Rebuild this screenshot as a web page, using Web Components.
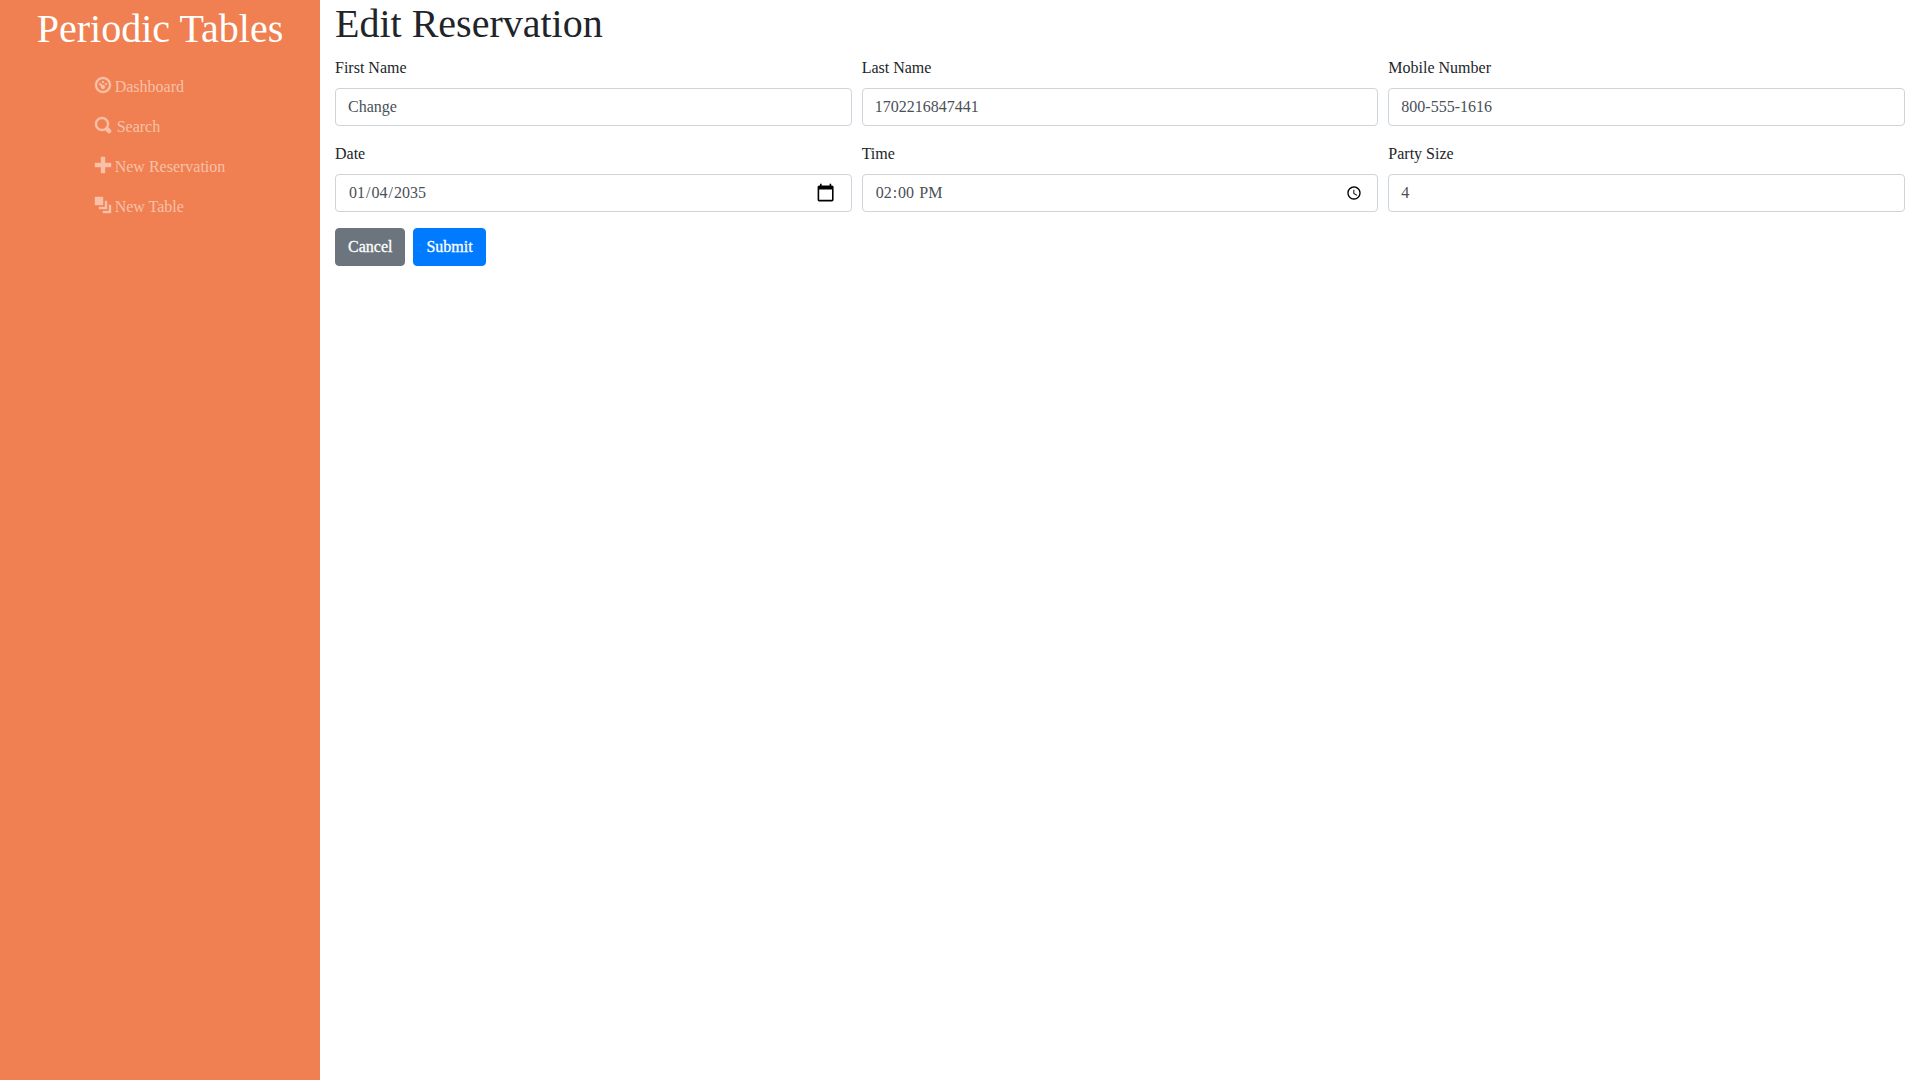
<!DOCTYPE html>
<html lang="en">
<head>
<meta charset="utf-8">
<title>Periodic Tables</title>
<style>
html,body{margin:0;height:100%}
body{font:16px/24px "Liberation Serif",serif;color:#212529;background:#fff}
</style>
</head>
<body>
<pt-app>
  <pt-sidebar slot="side" brand="Periodic Tables">
    <pt-nav-item icon="dashboard">Dashboard</pt-nav-item>
    <pt-nav-item icon="search" style="--gap:6px">Search</pt-nav-item>
    <pt-nav-item icon="plus">New Reservation</pt-nav-item>
    <pt-nav-item icon="layers">New Table</pt-nav-item>
  </pt-sidebar>
  <pt-form heading="Edit Reservation">
    <pt-field label="First Name" value="Change"></pt-field>
    <pt-field label="Last Name" value="1702216847441"></pt-field>
    <pt-field label="Mobile Number" value="800-555-1616" type="tel"></pt-field>
    <pt-field label="Date" value="2035-01-04" type="date"></pt-field>
    <pt-field label="Time" value="14:00" type="time"></pt-field>
    <pt-field label="Party Size" value="4" type="number"></pt-field>
    <pt-button slot="actions">Cancel</pt-button>
    <pt-button slot="actions" style="--btn:#007bff">Submit</pt-button>
  </pt-form>
</pt-app>
<script>
const ICONS = {
  dashboard: 'M4 0c-2.2 0-4 1.8-4 4s1.8 4 4 4 4-1.8 4-4-1.8-4-4-4zm0 1c1.66 0 3 1.34 3 3s-1.34 3-3 3-3-1.34-3-3 1.34-3 3-3zm0 1c-.28 0-.5.22-.5.5s.22.5.5.5.5-.22.5-.5-.22-.5-.5-.5zm-1.66 1a.5.5 0 0 0-.19.84l.91.91c-.02.08-.06.16-.06.25 0 .55.45 1 1 1s1-.45 1-1-.45-1-1-1c-.09 0-.17.04-.25.06l-.91-.91a.5.5 0 0 0-.44-.16.5.5 0 0 0-.06 0zm3.16 0c-.28 0-.5.22-.5.5s.22.5.5.5.5-.22.5-.5-.22-.5-.5-.5z',
  search: 'M3.5 0c-1.93 0-3.5 1.57-3.5 3.5s1.57 3.5 3.5 3.5c.59 0 1.17-.14 1.66-.41a1 1 0 0 0 .13.13l1 1a1.02 1.02 0 1 0 1.44-1.44l-1-1a1 1 0 0 0-.16-.13c.27-.49.44-1.06.44-1.66 0-1.93-1.55-3.5-3.5-3.5zm0 1c1.39 0 2.5 1.11 2.5 2.5 0 .66-.24 1.27-.66 1.72-.01.01-.02.02-.03.03a1 1 0 0 0-.13.13c-.44.4-1.04.63-1.69.63-1.39 0-2.5-1.11-2.5-2.5s1.11-2.5 2.5-2.5z',
  plus: 'M3 0v3h-3v2h3v3h2v-3h3v-2h-3v-3h-2z',
  layers: 'M0 0v4h4v-4h-4zm5 2v3h-3v1h4v-4h-1zm2 2v3h-3v1h4v-4h-1z'
};
const define = (name, markup) => customElements.define(name, class extends HTMLElement {
  connectedCallback() {
    if (this.shadowRoot) return;
    this.attachShadow({ mode: 'open' }).innerHTML = markup(this);
  }
});
define('pt-app', () => `<style>
  :host{display:flex;min-height:100vh}
  slot[name=side]::slotted(*){flex:0 0 320px}
  main{flex:1;min-width:0;padding:0 15px}
</style><slot name="side"></slot><main><slot></slot></main>`);
define('pt-sidebar', el => `<style>
  :host{display:flex;flex-direction:column;align-items:center;background:#f08051;color:#fff}
  .brand{font-size:40px;line-height:48px;margin:5px 0 14px;white-space:nowrap}
  nav{display:flex;flex-direction:column}
</style><div class="brand">${el.getAttribute('brand')}</div><nav><slot></slot></nav>`);
define('pt-nav-item', el => `<style>
  :host{display:block;padding:8px 0;color:#f8c0a8}
  a{display:flex;gap:var(--gap,4px);color:inherit;white-space:nowrap}
  svg{width:16px;height:16px;margin-top:2px;fill:currentColor;stroke:currentColor;stroke-width:.2;overflow:visible}
</style><a><svg viewBox="0 0 8 8"><path d="${ICONS[el.getAttribute('icon')]}"/></svg><span><slot></slot></span></a>`);
define('pt-form', el => `<style>
  :host{display:block}
  h1{margin:0 0 8px;font-size:40px;line-height:48px;font-weight:400}
  .grid{display:grid;grid-template-columns:repeat(3,minmax(0,1fr));gap:16px 10px}
  .actions{display:flex;gap:8px;margin-top:16px}
</style><h1>${el.getAttribute('heading')}</h1><div class="grid"><slot></slot></div><div class="actions"><slot name="actions"></slot></div>`);
define('pt-field', el => `<style>
  :host{display:block}
  label{display:block;margin-bottom:8px}
  .box{position:relative}
  .cal{position:absolute;right:16.4px;top:8.7px;width:19.2px;height:19.2px;fill:#000;pointer-events:none}
  input[type=date]::-webkit-calendar-picker-indicator{opacity:0}
  input{display:block;box-sizing:border-box;width:100%;height:38px;padding:6px 12px;margin:0;border:1px solid #ced4da;border-radius:4px;background:#fff;color:#495057;font:inherit}
</style><label for="i">${el.getAttribute('label')}</label><div class="box"><input id="i" type="${el.getAttribute('type') || 'text'}" value="${el.getAttribute('value')}">${el.getAttribute('type') === 'date' ? '<svg class="cal" viewBox="0 0 24 24"><path d="M20 3h-1V1h-2v2H7V1H5v2H4c-1.1 0-2 .9-2 2v16c0 1.1.9 2 2 2h16c1.1 0 2-.9 2-2V5c0-1.1-.9-2-2-2zm0 18H4V8h16v13z"/></svg>' : ''}</div>`);
define('pt-button', () => `<style>
  :host{display:block}
  button{display:block;height:38px;margin:0;padding:6px 12px;border:1px solid var(--btn,#6c757d);border-radius:4px;background:var(--btn,#6c757d);color:#fff;font:inherit;-webkit-text-stroke:.3px #fff}
</style><button type="button"><slot></slot></button>`);
</script>
</body>
</html>
